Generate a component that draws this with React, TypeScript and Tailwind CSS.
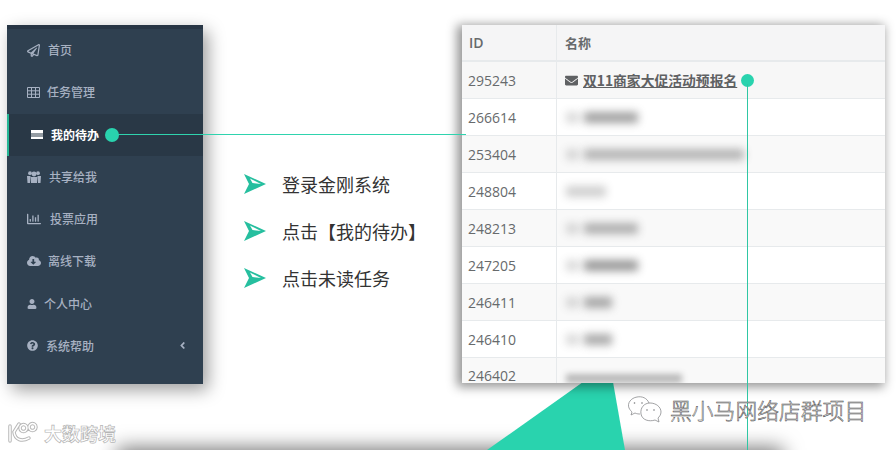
import {
  FaAngleLeft,
  FaCloudDownloadAlt,
  FaEnvelope,
  FaQuestionCircle,
  FaRegChartBar,
  FaRegPaperPlane,
  FaUser,
} from "react-icons/fa";
import type { ReactNode } from "react";

const cjk = "font-['Noto_Sans_CJK_SC','Noto_Sans',sans-serif]";

function GridIcon() {
  return (
    <svg width="13" height="11" viewBox="0 0 13 11" fill="none" stroke="currentColor" strokeWidth="1">
      <path d="M.5.5h12v10H.5zM.5 3.8h12M.5 7.2h12M4.5.5v10M8.5.5v10" />
    </svg>
  );
}

function GroupIcon() {
  return (
    <svg width="14" height="12" viewBox="0 0 14 12" fill="currentColor">
      <circle cx="3" cy="2.2" r="1.9" />
      <circle cx="11" cy="2.2" r="1.9" />
      <circle cx="7" cy="3" r="2.4" />
      <path d="M0 5h3.5L3 12H.5zM10.500 5H14l-.5 7H11zM3.700 6h6.600L10 12H4z" />
    </svg>
  );
}

interface NavItem {
  label: string;
  icon: ReactNode;
  gap: string;
}

const navItems: NavItem[] = [
  { label: "首页", icon: <FaRegPaperPlane className="text-[13px]" />, gap: "gap-[8px]" },
  { label: "任务管理", icon: <GridIcon />, gap: "gap-[7px]" },
];

const navItemsAfter: NavItem[] = [
  { label: "共享给我", icon: <GroupIcon />, gap: "gap-[8px]" },
  { label: "投票应用", icon: <FaRegChartBar className="text-[14px]" />, gap: "gap-[9px]" },
  { label: "离线下载", icon: <FaCloudDownloadAlt className="text-[14px]" />, gap: "gap-[7px]" },
  { label: "个人中心", icon: <FaUser className="text-[10px]" />, gap: "gap-[7px]" },
];

const rows = [
  { id: "266614", bars: [[13, 0.22], [54, 0.55]] },
  { id: "253404", bars: [[13, 0.22], [160, 0.42]] },
  { id: "248804", bars: [[40, 0.28]] },
  { id: "248213", bars: [[13, 0.22], [54, 0.45]] },
  { id: "247205", bars: [[13, 0.22], [54, 0.6]] },
  { id: "246411", bars: [[13, 0.22], [28, 0.5]] },
  { id: "246410", bars: [[13, 0.22], [28, 0.5]] },
];

const steps = ["登录金刚系统", "点击【我的待办】", "点击未读任务"];

function NavRow({ item }: { item: NavItem }) {
  return (
    <div className={`flex h-[42.25px] items-center pl-[20px] text-[#a7b1c2] ${item.gap}`}>
      {item.icon}
      <span className="text-[12px] font-medium">{item.label}</span>
    </div>
  );
}

function Arrow() {
  return (
    <svg width="24" height="22" viewBox="0 0 24 22" className="shrink-0">
      <path d="M1 1 L23 11 L1 21 L6 11 Z M7 5.500 L9.500 10 L18 11 Z" fill="#26bf9f" fillRule="evenodd" />
    </svg>
  );
}

function WechatMark() {
  return (
    <svg width="36" height="30" viewBox="0 0 36 30" fill="none" stroke="#8a8c8e" strokeWidth="0.8">
      <path d="M22 8 C20 3 15 1 10 2 C4 3 0 8 2 13 C3 15 4 16 5 17 L4 20 L8 18 C10 19 12 19 13 19" />
      <path d="M23 8 C29 8 34 12 34 17 C34 20 32 22 31 23 L32 27 L28 25 C22 27 15 25 14 19 C13 13 17 8 23 8 Z" />
      <circle cx="7.500" cy="8" r="0.8" fill="#77797b" stroke="none" />
      <circle cx="15" cy="8" r="0.8" fill="#77797b" stroke="none" />
      <circle cx="20" cy="15" r="0.8" fill="#77797b" stroke="none" />
      <circle cx="27" cy="15" r="0.8" fill="#77797b" stroke="none" />
    </svg>
  );
}

function BrandMark() {
  const shape = "M3 6 V21 M12 4 L7 12 C8 20 15 22 22 18 M20 8 A3.500 3.500 0 1 0 20 8.100 M29 7 A3.500 3.500 0 1 0 29 7.100";
  return (
    <svg width="36" height="26" viewBox="0 0 36 26" fill="none" strokeLinecap="round">
      <path d={shape} stroke="#b8b8b8" strokeWidth="3.500" />
      <path d={shape} stroke="#ffffff" strokeWidth="1.500" />
    </svg>
  );
}

export default function App() {
  return (
    <div className={`relative h-[450px] w-[896px] overflow-hidden bg-white ${cjk}`}>
      {/* card peeking in below the fold */}
      <div className="absolute left-[125px] top-[458px] h-[20px] w-[650px] bg-[#777] shadow-[0_-2px_20px_8px_rgba(0,0,0,0.55)]" />

      {/* green wedge under the table */}
      <svg width="896" height="450" className="absolute left-0 top-0">
        <polygon points="583,382 613,382 625,450 487,450" fill="#29d3ae" />
      </svg>

      <div className="relative flex items-start pl-[7px] pt-[25px]">
        {/* sidebar */}
        <aside className="flex h-[359px] w-[196px] shrink-0 flex-col border-t-[4px] border-[#283645] bg-[#2f4050] shadow-[5px_6px_16px_rgba(0,0,0,0.38)]">
          {navItems.map((item) => (
            <NavRow key={item.label} item={item} />
          ))}
          <div className="flex h-[42.25px] items-center gap-[8px] border-l-[2px] border-[#25b795] bg-[#293846] pl-[22px] text-white">
            <svg width="12" height="9" viewBox="0 0 12 9" fill="currentColor">
              <path d="M0 0 H12 V3.500 H0 Z M0 4.500 H12 V5.500 H0 Z M0 6.500 H12 V9 H0 Z" />
            </svg>
            <span className="text-[12px] font-bold">我的待办</span>
          </div>
          {navItemsAfter.map((item) => (
            <NavRow key={item.label} item={item} />
          ))}
          <div className="flex h-[42.25px] items-center pl-[20px] pr-[15px] text-[#a7b1c2]">
            <FaQuestionCircle className="text-[11px]" />
            <span className="ml-[8px] flex-1 text-[12px] font-medium">系统帮助</span>
            <FaAngleLeft className="text-[11px]" />
          </div>
        </aside>

        {/* steps */}
        <div className="flex w-[259px] shrink-0 flex-col gap-[24px] pl-[40px] pt-[147px]">
          {steps.map((step) => (
            <div key={step} className="flex h-[23px] items-center gap-[15px] text-[18px] leading-none text-[#333]">
              <Arrow />
              <span>{step}</span>
            </div>
          ))}
        </div>

        {/* table */}
        <div className="h-[358px] w-[423px] shrink-0 overflow-hidden bg-white font-['Open_Sans',sans-serif] text-[14px] text-[#676a6c] shadow-[-3px_2px_10px_2px_rgba(0,0,0,0.42)]">
          <div className="flex h-[37px] items-center border-b-[2px] border-[#e7eaec] bg-[#f5f5f6] font-semibold">
            <div className="flex h-full w-[95px] items-center border-r border-[#e7eaec] pl-[7px]">ID</div>
            <div className={`pl-[8px] text-[13px] ${cjk}`}>名称</div>
          </div>
          <div className="flex h-[37px] items-center border-b border-[#e7eaec] bg-[#f7f7f7]">
            <div className="flex h-full w-[95px] items-center border-r border-[#e7eaec] pl-[6px]">295243</div>
            <FaEnvelope className="ml-[8px] text-[13px] text-[#5f6163]" />
            <span className={`ml-[5px] text-[13.8px] font-semibold text-[#5f6163] underline ${cjk}`}>双11商家大促活动预报名</span>
          </div>
          {rows.map((row, index) => (
            <div
              key={row.id}
              className={`flex h-[37px] items-center border-b border-[#e7eaec] ${index % 2 === 1 ? "bg-[#f9f9f9]" : "bg-white"}`}
            >
              <div className="flex h-full w-[95px] items-center border-r border-[#e7eaec] pl-[6px]">{row.id}</div>
              <div className="ml-[9px] flex items-center gap-[5px]">
                {row.bars.map(([width, alpha], i) => (
                  <div
                    key={i}
                    className="h-[11px] bg-[#555] blur-[4px]"
                    style={{ width, opacity: alpha }}
                  />
                ))}
              </div>
            </div>
          ))}
          <div className="flex h-[25px] bg-[#f9f9f9]">
            <div className="h-full w-[95px] border-r border-[#e7eaec] pl-[6px] pt-[11px] leading-[14px]">246402</div>
            <div className="ml-[9px] mt-[16px] h-[9px] w-[116px] bg-[#555] opacity-40 blur-[3px]" />
          </div>
        </div>
      </div>

      {/* callout lines */}
      <div className="absolute left-[105px] top-[128px] h-[14px] w-[14px] rounded-full bg-[#29d3ae]" />
      <div className="absolute left-[118px] top-[134px] h-px w-[348px] bg-[#2fd3ae]" />
      <div className="absolute left-[741px] top-[74px] h-[13px] w-[13px] rounded-full bg-[#29d3ae]" />
      <div className="absolute left-[747px] top-[84px] h-[366px] w-px bg-[#2fc7a4]" />

      {/* watermarks */}
      <div className="absolute left-[627px] top-[395px] flex items-center gap-[7px]">
        <WechatMark />
        <span className="text-[21.8px] font-light leading-none text-white [-webkit-text-stroke:0.5px_#444]">黑小马网络店群项目</span>
      </div>
      <div className="absolute left-[7px] top-[420px] flex items-center gap-[1px]">
        <BrandMark />
        <span className="text-[18px] font-bold leading-none text-white [-webkit-text-stroke:0.7px_#b5b5b5]">大数跨境</span>
      </div>
    </div>
  );
}
